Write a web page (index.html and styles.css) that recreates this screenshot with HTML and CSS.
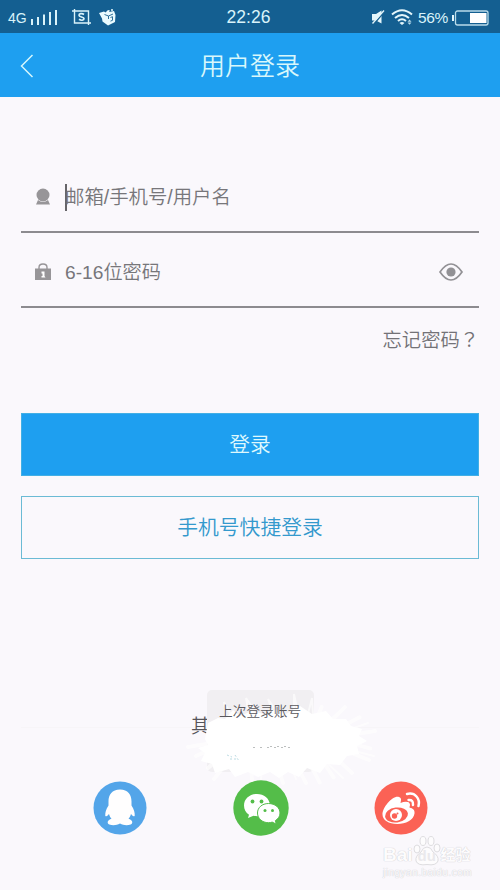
FILE: index.html
```html
<!DOCTYPE html>
<html lang="zh-CN">
<head>
<meta charset="utf-8">
<title>用户登录</title>
<link rel="stylesheet" href="styles.css">
</head>
<body>
<div class="screen">
  <div class="status">
    <div class="status-left">
      <span class="network">4G</span>
      <svg class="signal" width="26" height="17" viewBox="0 0 26 17" stroke="#d9f3fa" stroke-width="2"><path d="M1 16v-6M7 16V8M13 16V5.500M19 16V3M25 16V1"/></svg>
      <svg class="shot" width="19" height="17" viewBox="0 0 19 17" fill="none" stroke="#d9f3fa" stroke-width="1.4"><path d="M0 2h16.500v14M2.500 0v14H19"/><path d="M12 5.500C10 4 7 4.500 7 6.300c0 2 5 1.300 5 3.300 0 1.900-3 2.200-5 .7" stroke-width="1.700"/></svg>
      <svg class="cube" width="18" height="17" viewBox="0 0 18 17"><path d="M0 4l5-1.500 1.500 1L9 1l2 .5L10 3l5-1 1.500 4-.5 7-7 3.500-5.500-4L3 9.500z" fill="#e9fbff"/><path d="M5.500 5.500l4 1.500 4.500-2M11.500 8.500l2-.8v3.600l-2 .8M9.500 7v3" fill="none" stroke="#17608f" stroke-width=".9"/><circle cx="13" cy="1" r="1" fill="#e9fbff"/></svg>
    </div>
    <span class="clock">22:26</span>
    <div class="status-right">
      <svg class="mute" width="14" height="15" viewBox="0 0 14 15"><path d="M1 4h4l5.500-3.500v13L5 10.500H1z" fill="#e4f6fb"/><path d="M13.500 1.500L3 14" stroke="#17608f" stroke-width="1.500"/><path d="M13 .5L1.500 13.500" stroke="#e4f6fb" stroke-width="1.300"/></svg>
      <svg class="wifi" width="22" height="17" viewBox="0 0 22 17" fill="none" stroke="#e4f6fb" stroke-width="2"><path d="M1 5.500q10-8.500 20 0M4 9q7-6 14 0M7 12q4-3.500 8 0"/><path d="M8.500 14q2.500-2 5 0L11 16z" fill="#e4f6fb" stroke="none"/><path d="M18.500 10.500l2 2.200h-4zM18.500 15.800l2-2.200h-4z" fill="#b7dcec" stroke="none"/></svg>
      <span class="percent">56%</span>
      <svg class="battery" width="37" height="16" viewBox="0 0 37 16"><rect x="3.500" y="1" width="32.500" height="14" rx="2" fill="none" stroke="#b9dcea" stroke-width="1.300"/><path d="M0 5h2v6H0z" fill="#e4f6fb"/><rect x="18" y="3" width="16.500" height="10" fill="#fff"/></svg>
    </div>
  </div>
  <header class="header">
    <svg class="back" width="14" height="24" viewBox="0 0 14 24"><path d="M12.500 1L1.500 12l11 11" fill="none" stroke="#d5f7fc" stroke-width="1.500"/></svg>
    <h1 class="title">用户登录</h1>
  </header>
  <main class="content">
    <div class="field">
      <svg class="field-icon" width="16" height="18" viewBox="0 0 16 18" fill="#979598"><circle cx="8" cy="7" r="6.500"/><path d="M3 12q5 4 10 0l2 4.500H1z"/></svg>
      <span class="caret"></span>
      <span class="placeholder user">邮箱/手机号/用户名</span>
    </div>
    <div class="field second">
      <svg class="field-icon" width="16" height="18" viewBox="0 0 16 18"><path d="M4 6V4.500q0-3.500 4-3.500t4 3.500V6" fill="none" stroke="#979598" stroke-width="1.400"/><path d="M0 5.500h16V17H0z" fill="#979598"/><path d="M6.500 8.500h3v4.500l1 1.500h-4V13h1v-2.500h-1z" fill="#fff"/></svg>
      <span class="placeholder password">6-16位密码</span>
      <svg class="eye" width="24" height="18" viewBox="0 0 24 18"><path d="M1 9Q12-7 23 9 12 25 1 9z" fill="none" stroke="#929195" stroke-width="1.700"/><circle cx="12" cy="9" r="4.600" fill="#929195"/></svg>
    </div>
    <a class="forgot"><span>忘记密码</span><span class="mark" lang="zh-TW">？</span></a>
    <button class="button primary">登录</button>
    <button class="button outline">手机号快捷登录</button>
    <section class="social">
      <span class="other">其</span>
      <div class="divider"></div>
      <div class="icons">
        <svg width="54" height="54" viewBox="0 0 54 54"><circle cx="27" cy="27" r="26.500" fill="#53a5e9"/><path d="M27 8.500c-8 0-11.500 5-11.500 12v4c-2.500 4-3.500 7-3.200 10.500 1.500 1 2.500-.5 3.700-2 .7 2 1.300 3.500 2.500 4.800-4 1-5 4.700-2.200 5.700 3.500 1.200 7.500.8 10.700-1 3.200 1.800 7.200 2.200 10.700 1 2.800-1 1.800-4.700-2.200-5.700 1.200-1.300 1.800-2.800 2.500-4.800 1.200 1.500 2.200 3 3.700 2 .3-3.500-.7-6.500-3.200-10.500v-4c0-7-3.500-12-11.500-12z" fill="#fffefe"/></svg>
        <svg width="56" height="56" viewBox="0 0 56 56"><circle cx="28" cy="28" r="27.700" fill="#54bd49"/><path d="M24 14c-7.500 0-13 5-13 11.500 0 4 1.700 7 5 9.200L15 38l5.500-2.300q6 1.500 11-1.500 6-3.500 5.500-9.500C36.400 18.500 31 14 24 14z" fill="#fff"/><path d="M35.500 23.500c-6.500 0-11 4.200-11 9.500s4.500 9.700 11 9.700q2 0 3.700-.6l4 2-.8-3.500c3-1.900 4.600-4.300 4.600-7.600 0-5.300-4.900-9.500-11.500-9.500z" fill="#fff" stroke="#54bd49"/><g fill="#54bd49"><circle cx="19.500" cy="21.500" r="1.900"/><circle cx="28.500" cy="21.500" r="1.900"/><circle cx="32" cy="30.500" r="1.500"/><circle cx="39.500" cy="30.500" r="1.500"/></g></svg>
        <svg width="54" height="54" viewBox="0 0 54 54"><circle cx="27" cy="27" r="26.500" fill="#fb6255"/><path d="M25 16c3 1 2 4 1.500 6 4-1.500 9-2 9.500 1.500.2 1.300-.7 2.200-.5 3 3.500 1 5.500 2.500 5 6-.8 6.500-9 10.500-17 10.500-9 0-15-4-15-9.500C8.500 26 19 14 25 16z" fill="#fff"/><ellipse cx="22.500" cy="34" rx="11.500" ry="7.500" transform="rotate(-7 22.500 34)" fill="#fb6255"/><circle cx="22" cy="34" r="6" fill="#fff"/><circle cx="20.500" cy="35" r="2.700" fill="#fb6255"/><circle cx="23.500" cy="32.500" r="1" fill="#fb6255"/><path d="M33 13q6-1.500 9.500 2.500 3.500 4 2 9.500M34.500 19q5-.5 4.500 5" fill="none" stroke="#fff" stroke-width="2.500" stroke-linecap="round"/></svg>
      </div>
    </section>
  </main>
  <div class="toast"></div>
  <svg class="splash" width="230" height="120" viewBox="0 0 230 120">
    <g fill="none" stroke="#fff">
      <path d="M38 43l10-5 7 1 8-9 7 6 12-5 12 3 12-5 10 5 14-8 12 8 14-3 7 8 13 0 5 7 11 3-3 7 8 5-10 5 2 8-12 2-7 9-13-1-7 9-13-5-8 9-11-5-9 6-9-6-12 5-10-5-13 5-6-8-14 4-3-9-11-3 4-8-7-5 10-3-3-6z" fill="#fff" stroke="none"/>
      <g opacity=".65" stroke-linecap="round">
        <path d="M42 63L18 67M44 68L26 76M52 76L38 88M59 80L44 99M72 84L64 94M81 84l1 16M108 87l5 16M127 86l9 17M140 84l10 19M152 80l12 18M164 76l18 17M174 70l25 10M180 63l22 6M180 55l25-4M171 47l19-10M160 42l15-15M147 38l5-12" stroke-width="4" stroke-dasharray="12 2 7 2"/>
        <path d="M93 84L91 99M120 84L126 99M153 79L173 98M173 68L204 76M178 50L198 43M158 42L171 30M56 35l-2-13 6 11M78 30l-2-12 7 10M102 30l-4-11 7 10M124 33l0-19 4 19M138 34l4-16 1 17" stroke-width="2"/>
      </g>
    </g>
    <g stroke="#5a6060" stroke-dasharray="2 5" opacity=".4"><path d="M83 67.500h42M100 66.500h19"/></g>
    <path d="M57 75l5 2M60 79h7M65 75l4 6" stroke="#91c5d2" stroke-dasharray="2 2" opacity=".6"/>
  </svg>
  <div class="toast-text">上次登录账号</div>
  <div class="watermark">
    <div class="brand"><span>Bai</span><span class="paw"><svg width="28" height="30" viewBox="0 0 28 30" fill="#fdfcfd" stroke="#dedde0"><ellipse cx="4" cy="13" rx="3" ry="4"/><ellipse cx="10" cy="5" rx="3" ry="4.500"/><ellipse cx="18" cy="5" rx="3" ry="4.500"/><ellipse cx="24" cy="12" rx="3" ry="4"/><path d="M14 11q4 0 6 5 6 4 5 9-2 5-11 3.500Q5 30 3 25q-1-5 5-9 2-5 6-5z"/></svg><b>du</b></span><span class="jy">经验</span></div>
    <div class="site">jingyan.baidu.com</div>
  </div>
</div>
</body>
</html>
```
FILE: styles.css
```css
* { box-sizing: border-box; }
body { margin: 0; background: #faf8fc; font-family: "Liberation Sans", "Noto Sans CJK SC", sans-serif; font-weight: 350; }
.screen { position: relative; width: 500px; height: 890px; overflow: hidden; }
svg { display: block; flex: none; }
.status { display: grid; grid-template-columns: 1fr auto 1fr; align-items: center; height: 33px; padding: 2px 11px 0 8px; background: #145f91; color: #d9f3fa; font-weight: 400; }
.status-left, .status-right { display: flex; align-items: center; }
.status-right { justify-content: flex-end; }
.network { font-size: 14px; line-height: 18px; }
.signal { margin-left: 4px; }
.shot { margin-left: 15px; }
.cube { margin-left: 8px; }
.clock { font-size: 17.500px; }
.wifi { margin-left: 6px; }
.percent { margin-left: 5px; font-size: 15.500px; letter-spacing: -.3px; }
.battery { margin-left: 4px; }
.header { display: grid; grid-template-columns: 1fr auto 1fr; align-items: center; height: 64px; padding: 1px 20px 0; background: #1e9ff0; }
.title { margin: 0; font-size: 25px; line-height: 36px; font-weight: 350; color: #d8f7fb; }
.content { padding: 61px 21px 0; }
.field { display: flex; align-items: center; height: 75px; padding: 5px 16px 0 14px; border-bottom: 2px solid #8c8b8f; color: #77767a; }
.caret { width: 1.500px; height: 27px; margin: 0 -1.500px 0 14px; background: #666569; }
.placeholder { font-size: 19px; line-height: 28px; white-space: nowrap; }
.user { font-size: 19.400px; }
.password { margin-left: 14px; padding-top: 2px; font-size: 19.200px; }
.second { padding-top: 4px; }
.eye { margin-left: auto; }
.forgot { display: flex; justify-content: flex-end; margin-top: 19px; color: #737277; font-size: 19.300px; line-height: 28px; }
.mark { margin-top: -2px; font-family: "Noto Sans CJK TC", sans-serif; }
.button { display: flex; justify-content: center; align-items: center; width: 100%; height: 63px; padding: 1px 0 0; border: 1px solid #6bbbd5; font: 350 20.800px/30px "Liberation Sans", "Noto Sans CJK SC", sans-serif; }
.primary { margin-top: 58px; background: #1e9ff0; color: #dff8fd; border-color: #42afe5; }
.outline { margin-top: 20px; background: transparent; color: #3499cd; }
.social { padding-top: 154px; }
.other { display: block; margin-left: 170px; height: 28px; color: #55545a; font-size: 19px; line-height: 28px; }
.divider { height: 1px; margin-top: -14px; background: #f7f5f8; }
.icons { display: flex; justify-content: space-between; align-items: center; margin: 52px 51px 0 72px; }
.toast { position: absolute; left: 207px; top: 690px; width: 107px; height: 82px; border-radius: 5px; background: #f1eff2; }
.splash { position: absolute; left: 170px; top: 680px; }
.toast-text { position: absolute; left: 219px; top: 700px; color: #59585d; font-size: 13.700px; line-height: 24px; white-space: nowrap; }
.watermark { position: absolute; left: 383px; top: 836px; width: 92px; color: #fdfcfd; text-shadow: 0 0 1px #cbcacf, 0 0 1px #d8d7da; font-weight: 700; }
.brand { display: flex; align-items: flex-end; height: 30px; font-size: 19px; line-height: 23px; }
.paw { position: relative; }
.paw b { position: absolute; left: 5px; bottom: -1px; font-size: 15px; color: #eae9ec; text-shadow: none; }
.jy { font-size: 15px; }
.site { font-size: 10px; line-height: 14px; font-weight: 400; letter-spacing: .5px; }
```
